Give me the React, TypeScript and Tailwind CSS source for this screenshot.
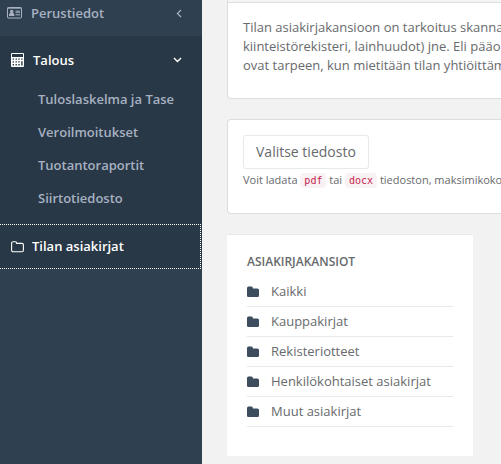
import { useState } from "react";

const financeLinks = [
  "Tuloslaskelma ja Tase",
  "Veroilmoitukset",
  "Tuotantoraportit",
  "Siirtotiedosto",
];

const folders = [
  "Kaikki",
  "Kauppakirjat",
  "Rekisteriotteet",
  "Henkilökohtaiset asiakirjat",
  "Muut asiakirjat",
];

function IdCardIcon() {
  return (
    <svg width="15" height="12" viewBox="0 0 15 12" fill="none" aria-hidden="true">
      <rect x="0.5" y="0.5" width="14" height="10.5" rx="0.8" stroke="currentColor" />
      <path d="M0.5 1.2h14" stroke="currentColor" />
      <circle cx="4.7" cy="4.4" r="1.7" fill="currentColor" />
      <path d="M2 9c0-2.2.8-3.2 1.6-3.2h2.2c.8 0 1.6 1 1.6 3.2z" fill="currentColor" />
      <path d="M8.5 3.5H13v2.7H8.5z" fill="currentColor" fillOpacity="0.7" />
      <path d="M8.5 7.8H13" stroke="currentColor" />
    </svg>
  );
}

function CalculatorIcon() {
  return (
    <svg width="13" height="14" viewBox="0 0 13 14" aria-hidden="true">
      <path
        fill="currentColor"
        fillRule="evenodd"
        d="M1 0h11a1 1 0 0 1 1 1v12a1 1 0 0 1-1 1H1a1 1 0 0 1-1-1V1a1 1 0 0 1 1-1zM1 1v3h11V1zM1.6 5.4v1.4H3V5.4zM4.5 5.4v1.4h1.4V5.4zM7.3 5.4v1.4h1.4V5.4zM10.2 5.4v1.4h1.4V5.4zM1.6 8.2v1.4H3V8.2zM4.5 8.2v1.4h1.4V8.2zM7.3 8.2v1.4h1.4V8.2zM1.6 11.1v1.4H3v-1.4zM4.5 11.1v1.4h1.4v-1.4zM7.3 11.1v1.4h1.4v-1.4zM10.2 8.2v4.3h1.4V8.2z"
      />
    </svg>
  );
}

function FolderOutlineIcon() {
  return (
    <svg width="13" height="12" viewBox="0 0 13 12" fill="none" aria-hidden="true">
      <path
        d="M.6 9.3V2.1c0-.8.6-1.4 1.4-1.4h2.3c.8 0 1.4.6 1.4 1.4v.3H11c.8 0 1.4.6 1.4 1.4v5.5c0 .8-.6 1.4-1.4 1.4H2c-.8 0-1.4-.6-1.4-1.4z"
        stroke="currentColor"
        strokeWidth="1.1"
      />
    </svg>
  );
}

function FolderIcon() {
  return (
    <svg width="12" height="12" viewBox="0 0 12 12" className="text-[#3d4d5d]" aria-hidden="true">
      <path
        fill="currentColor"
        d="M0 9.4V2.3C0 1.3.8.6 1.7.6h2.5c.9 0 1.7.7 1.7 1.7v.2h4.4c1 0 1.7.8 1.7 1.7v5.2c0 .9-.7 1.7-1.7 1.7H1.7C.8 11.1 0 10.3 0 9.4z"
      />
    </svg>
  );
}

function AngleLeftIcon() {
  return (
    <svg width="6" height="9" viewBox="0 0 6 9" fill="none" aria-hidden="true">
      <path d="M5 1L1.4 4.5 5 8" stroke="currentColor" strokeWidth="1.2" />
    </svg>
  );
}

function AngleDownIcon() {
  return (
    <svg width="9" height="6" viewBox="0 0 9 6" fill="none" aria-hidden="true">
      <path d="M1 1l3.5 3.5L8 1" stroke="currentColor" strokeWidth="1.4" />
    </svg>
  );
}

function Sidebar() {
  const [open, setOpen] = useState(true);

  return (
    <nav className="w-[202px] shrink-0 bg-[#2f4050] text-[13px] leading-[18px] font-semibold text-[#a7b1c2]">
      <a href="#perustiedot" className="flex items-center pt-1 pr-5 pb-3.5 pl-[7px]">
        <IdCardIcon />
        <span className="ml-[9px] flex-1">Perustiedot</span>
        <AngleLeftIcon />
      </a>
      <div className="bg-[#293846]">
        <button
          type="button"
          aria-expanded={open}
          onClick={() => setOpen(!open)}
          className="flex w-full items-center pt-[15px] pr-5 pb-3.5 pl-[11px] text-left text-white"
        >
          <CalculatorIcon />
          <span className="ml-[9px] flex-1">Talous</span>
          <AngleDownIcon />
        </button>
        {open && (
          <ul className="pb-[9px]">
            {financeLinks.map((label) => (
              <li key={label}>
                <a href="#talous" className="block py-[7px] pr-2.5 pl-[38px] leading-[19px]">
                  {label}
                </a>
              </li>
            ))}
          </ul>
        )}
        <a
          href="#asiakirjat"
          className="mr-px flex items-center border border-l-0 border-dotted border-white py-3 pl-[11px] leading-[19px] text-white"
        >
          <FolderOutlineIcon />
          <span className="ml-2">Tilan asiakirjat</span>
        </a>
      </div>
    </nav>
  );
}

function Code({ children }: { children: string }) {
  return (
    <code className="rounded bg-[#f9f2f4] px-1 py-0.5 font-['DejaVu_Sans_Mono',monospace] text-[10px] text-[#c7254e]">
      {children}
    </code>
  );
}

export default function App() {
  return (
    <div className="flex min-h-screen overflow-hidden bg-[#f2f2f2] font-['Open_Sans',sans-serif] text-[13px] text-[#676a6c]">
      <Sidebar />
      <main className="min-w-0 flex-1 overflow-hidden pl-[25px]">
        <section className="rounded-bl border-b border-l border-[#ddd] bg-white">
          <div className="h-[3px] border-b border-[#ddd] bg-[#f5f5f5]" />
          <p className="px-[15px] pt-[15px] pb-[23px] leading-[19px] whitespace-nowrap">
            Tilan asiakirjakansioon on tarkoitus skanna
            <br />
            kiinteistörekisteri, lainhuudot) jne. Eli pääo
            <br />
            ovat tarpeen, kun mietitään tilan yhtiöittäm
          </p>
        </section>

        <section className="mt-5 rounded-l border border-r-0 border-[#ddd] bg-white px-[15px] pt-[15px] pb-[23px]">
          <button
            type="button"
            className="block rounded-[3px] border border-[#e7eaec] bg-white px-3 py-1.5 text-[14px] leading-5"
          >
            Valitse tiedosto
          </button>
          <p className="pt-0.5 text-[11px] leading-[18px] whitespace-nowrap">
            Voit ladata <Code>pdf</Code> tai <Code>docx</Code> tiedoston, maksimikoko
          </p>
        </section>

        <section className="mt-5 mr-7 border-t border-[#e7eaec] bg-white px-5 pt-[19px] pb-[29px]">
          <h5 className="text-[12px] leading-4 font-semibold">ASIAKIRJAKANSIOT</h5>
          <ul className="mt-[7px]">
            {folders.map((name) => (
              <li key={name} className="border-b border-[#e7eaec]">
                <a href="#kansio" className="flex items-center gap-3 py-[5px] leading-[19px]">
                  <FolderIcon />
                  {name}
                </a>
              </li>
            ))}
          </ul>
        </section>
      </main>
    </div>
  );
}
